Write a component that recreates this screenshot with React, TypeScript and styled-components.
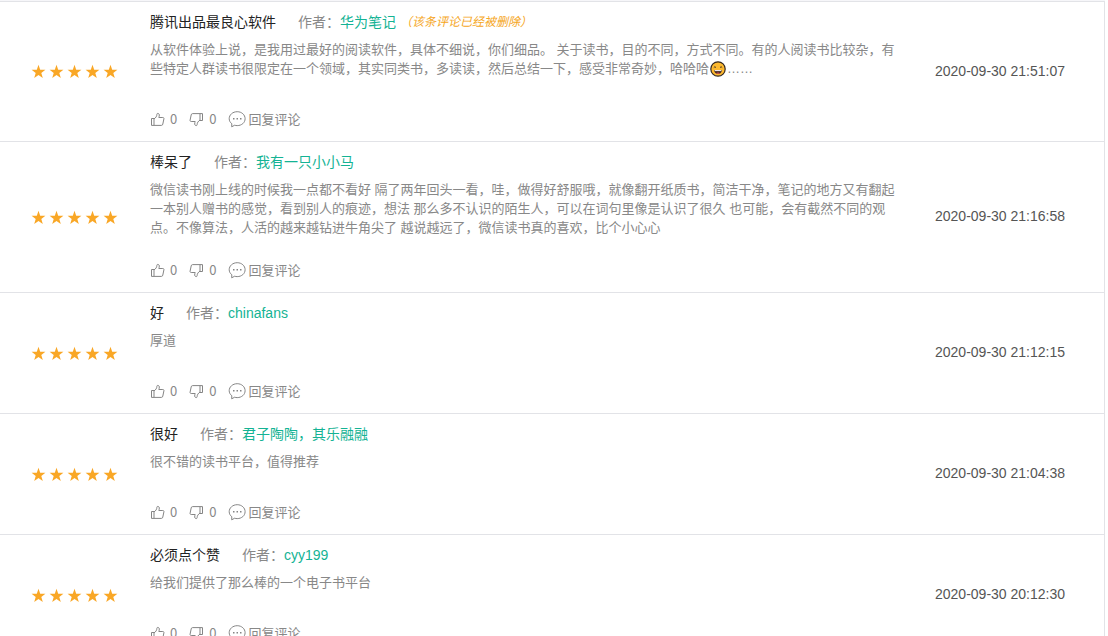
import React from "react";
import styled, { createGlobalStyle } from "styled-components";

const GlobalStyle = createGlobalStyle`
  * { box-sizing: border-box; }
  body {
    margin: 0;
    background: #fff;
    color: #888;
    font-family: "Liberation Sans", "Noto Sans CJK SC", sans-serif;
    font-size: 13px;
  }
`;

const Page = styled.main`
  margin-right: 3px;
  border-top: 1px solid #f6f6f9;
`;

const ReviewList = styled.ul`
  list-style: none;
  margin: 0;
  padding: 0;
  border-top: 1px solid #e2e3e7;
  border-right: 1px solid #e2e3e7;
`;

const Review = styled.li`
  display: grid;
  grid-template-columns: 119px 1fr auto;
  align-items: center;
  padding: 0 39px 0 31px;
  border-bottom: 1px solid #e2e3e7;
`;

const Stars = styled.div`
  display: flex;
  gap: 3px;
  color: #f9a726;
`;

const Content = styled.article`
  padding: 10px 35px 12px 0;
`;

const Heading = styled.header`
  display: flex;
  align-items: center;
  height: 20px;
  font-size: 14px;
  line-height: 20px;
`;

const Title = styled.h3`
  margin: 0 22px 0 0;
  color: #222;
  font-size: 14px;
  font-weight: 400;
`;

const Author = styled.a`
  color: #14b394;
  text-decoration: none;
`;

const Deleted = styled.em`
  margin-left: 4px;
  color: #f5a623;
  font-size: 12px;
`;

const Text = styled.p<{ $full?: boolean }>`
  margin: 8px 0 23px;
  padding-bottom: ${(p) => (p.$full ? "0" : "8px")};
  line-height: 19px;
`;

const Emoji = styled.svg`
  margin: 0 1px;
  vertical-align: -4px;
  height: 16px;
  width: 16px;
`;

const Actions = styled.footer`
  display: flex;
  align-items: center;
  gap: 12px;
  height: 20px;
`;

const Action = styled.button<{ $gap: number }>`
  display: flex;
  align-items: center;
  gap: ${(p) => p.$gap}px;
  margin: 0;
  padding: 0;
  border: 0;
  background: none;
  color: inherit;
  font: 13px/20px "Noto Sans CJK SC", sans-serif;
  cursor: pointer;
`;

const Time = styled.time`
  padding-bottom: 2px;
  color: #555;
  font-size: 14px;
  line-height: 20px;
  white-space: nowrap;
`;

const Star = () => (
  <svg width="15" height="15" viewBox="0 0 15 15" fill="currentColor" aria-hidden="true">
    <path d="M7.500 .8l1.700 4.900 5.200.1-4.100 3.200 1.500 5-4.300-2.900L3.200 14l1.500-5L.6 5.800l5.200-.1z" />
  </svg>
);

const thumbShape =
  "M1.500 6.500h2.500v6.900H1.500zM4 6.900C5.900 5.700 6.800 4.300 6.900 2.300 6.900.9 9.300 1.100 9.300 3c0 1-.2 1.700-.5 2.500h4c.9 0 1.300.6 1.100 1.400l-1.100 5.200c-.2.900-.6 1.300-1.400 1.300H4";

const Thumb = ({ down }: { down?: boolean }) => (
  <svg width="15" height="15" viewBox="0 0 15 15" fill="none" stroke="#858585" aria-hidden="true">
    <path d={thumbShape} transform={down ? "rotate(180 7.500 7.500)" : undefined} />
  </svg>
);

const Bubble = () => (
  <svg width="18" height="18" viewBox="0 0 18 18" fill="none" stroke="#858585" aria-hidden="true">
    <path d="M3.800 13.700C2.100 12.500 1.200 10.700 1.200 8.700 1.200 4.800 4.700 1.700 9.200 1.700s7.900 3.100 7.900 7-3.400 6.900-7.900 6.900c-.9 0-1.800-.1-2.500-.4L3.700 16.800z" />
    <path fill="#858585" stroke="none" d="M5 8h1.500v1.500H5zM8.500 8H10v1.500H8.500zM12 8h1.500v1.500H12z" />
  </svg>
);

const Grin = () => (
  <Emoji viewBox="0 0 16 16" role="img" aria-label="笑脸">
    <circle cx="8" cy="8" r="7.200" fill="#fdb92e" stroke="#33271f" strokeWidth="1.200" />
    <path d="M3.800 6.600q1.100-1.800 2.200 0M10 6.600q1.100-1.800 2.200 0" fill="none" stroke="#33271f" strokeWidth=".9" />
    <path d="M4 9h8q-.6 4-4 4T4 9z" fill="#4a2b24" />
    <path d="M4.600 9.100h6.800v1H4.600z" fill="#fff" />
    <path d="M6 12.200q2-1.300 4 0-2 1.200-4 0z" fill="#e9574d" />
  </Emoji>
);

interface Entry {
  title: string;
  author: string;
  time: string;
  text: React.ReactNode;
  deleted?: boolean;
  full?: boolean;
}

const reviews: Entry[] = [
  {
    title: "腾讯出品最良心软件",
    author: "华为笔记",
    time: "2020-09-30 21:51:07",
    deleted: true,
    text: (
      <>
        从软件体验上说，是我用过最好的阅读软件，具体不细说，你们细品。 关于读书，目的不同，方式不同。有的人阅读书比较杂，有些特定人群读书很限定在一个领域，其实同类书，多读读，然后总结一下，感受非常奇妙，哈哈哈<Grin />……
      </>
    ),
  },
  {
    title: "棒呆了",
    author: "我有一只小小马",
    time: "2020-09-30 21:16:58",
    full: true,
    text: "微信读书刚上线的时候我一点都不看好 隔了两年回头一看，哇，做得好舒服哦，就像翻开纸质书，简洁干净，笔记的地方又有翻起一本别人赠书的感觉，看到别人的痕迹，想法 那么多不认识的陌生人，可以在词句里像是认识了很久 也可能，会有截然不同的观点。不像算法，人活的越来越钻进牛角尖了 越说越远了，微信读书真的喜欢，比个小心心",
  },
  { title: "好", author: "chinafans", time: "2020-09-30 21:12:15", text: "厚道" },
  { title: "很好", author: "君子陶陶，其乐融融", time: "2020-09-30 21:04:38", text: "很不错的读书平台，值得推荐" },
  { title: "必须点个赞", author: "cyy199", time: "2020-09-30 20:12:30", text: "给我们提供了那么棒的一个电子书平台" },
];

export default function App() {
  return (
    <Page lang="zh-CN">
      <GlobalStyle />
      <ReviewList>
        {reviews.map((r) => (
          <Review key={r.time}>
            <Stars role="img" aria-label="5 星">
              {[1, 2, 3, 4, 5].map((n) => <Star key={n} />)}
            </Stars>
            <Content>
              <Heading>
                <Title>{r.title}</Title>
                <span>作者：</span>
                <Author href="#">{r.author}</Author>
                {r.deleted && <Deleted>（该条评论已经被删除）</Deleted>}
              </Heading>
              <Text $full={r.full}>{r.text}</Text>
              <Actions>
                <Action type="button" $gap={5} aria-label="赞 0"><Thumb />0</Action>
                <Action type="button" $gap={5} aria-label="踩 0"><Thumb down />0</Action>
                <Action type="button" $gap={2}><Bubble />回复评论</Action>
              </Actions>
            </Content>
            <Time>{r.time}</Time>
          </Review>
        ))}
      </ReviewList>
    </Page>
  );
}
